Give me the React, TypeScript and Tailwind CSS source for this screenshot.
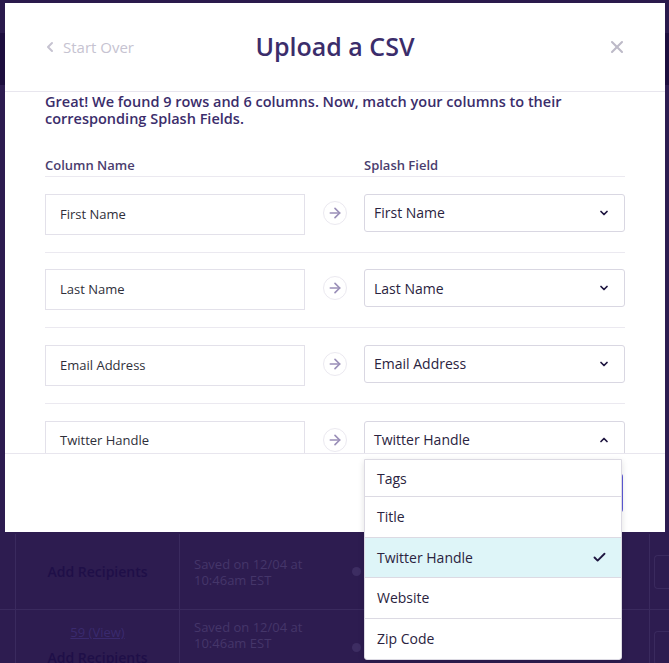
import { ChevronLeft, X, ArrowRight, ChevronDown, ChevronUp, Check } from 'lucide-react';

const rows = [
  { column: 'First Name', field: 'First Name', open: false },
  { column: 'Last Name', field: 'Last Name', open: false },
  { column: 'Email Address', field: 'Email Address', open: false },
  { column: 'Twitter Handle', field: 'Twitter Handle', open: true },
];

const options = ['Tags', 'Title', 'Twitter Handle', 'Website', 'Zip Code'];

function SavedOn() {
  return (
    <div className="flex flex-col text-[13px] leading-[16px] text-[#45366a]">
      <span>Saved on 12/04 at</span>
      <span>10:46am EST</span>
    </div>
  );
}

function BackgroundPage() {
  return (
    <div className="flex h-full w-full flex-col bg-[#2d1c50]">
      <div className="h-[33px] shrink-0 bg-[#2a1a4c]" />
      <div className="h-[52px] shrink-0 bg-[#1d0e3e]" />
      <div className="h-[449px] shrink-0" />
      <div className="flex h-[76px] shrink-0 border-b border-[#3a2a5e]">
        <div className="w-[16px] border-r border-[#3a2a5e]" />
        <div className="flex w-[164px] items-center justify-center border-r border-[#3a2a5e] text-[14px] font-semibold text-[#1f0f48]">
          Add Recipients
        </div>
        <div className="flex w-[160px] items-center pl-[14px]">
          <SavedOn />
        </div>
        <div className="flex flex-1 items-center pl-[12px]">
          <span className="size-[9px] rounded-full bg-[#3d2d62]" />
        </div>
        <div className="flex w-[20px] items-center border-l border-[#3a2a5e] pl-[4px]">
          <span className="h-[34px] w-[16px] rounded-l border border-r-0 border-[#3a2a5e]" />
        </div>
      </div>
      <div className="flex h-[76px] shrink-0">
        <div className="w-[16px] border-r border-[#3a2a5e]" />
        <div className="flex w-[164px] flex-col items-center gap-[10px] border-r border-[#3a2a5e] pt-[14px] leading-[16px]">
          <span className="text-[13px] text-[#3a2a6e] underline">59 (View)</span>
          <span className="text-[14px] font-semibold text-[#1f0f48]">Add Recipients</span>
        </div>
        <div className="w-[160px] pl-[14px] pt-[9px]">
          <SavedOn />
        </div>
        <div className="flex flex-1 items-start pl-[12px] pt-[33px]">
          <span className="size-[9px] rounded-full bg-[#3d2d62]" />
        </div>
        <div className="flex w-[20px] items-start border-l border-[#3a2a5e] pl-[4px] pt-[21px]">
          <span className="h-[34px] w-[16px] rounded-l border border-r-0 border-[#3a2a5e]" />
        </div>
      </div>
    </div>
  );
}

function MappingRow({ column, field, open }: { column: string; field: string; open: boolean }) {
  return (
    <div className="flex items-start border-b border-[#ebe9f0] py-[16.8px]">
      <div className="flex h-[41px] w-[260px] items-center border border-[#e3e1ea] pl-[14px] text-[13px] text-[#2f2f3a]">
        {column}
      </div>
      <div className="flex w-[59px] justify-center pt-[7px]">
        <div className="flex size-[24px] items-center justify-center rounded-full border border-[#ebe9f0]">
          <ArrowRight size={16} strokeWidth={2.5} className="text-[#9a8fb8]" />
        </div>
      </div>
      <div className="flex h-[38px] flex-1 items-center justify-between rounded-[3px] border border-[#d9d7e2] pl-[9px] pr-[14px] text-[14px] text-[#2a2340]">
        <span>{field}</span>
        {open ? (
          <ChevronUp size={12} strokeWidth={3.5} className="text-[#1f1640]" />
        ) : (
          <ChevronDown size={12} strokeWidth={3.5} className="text-[#1f1640]" />
        )}
      </div>
    </div>
  );
}

export default function App() {
  return (
    <div className="relative h-[663px] w-full overflow-hidden font-['Open_Sans',sans-serif]">
      <BackgroundPage />

      {/* modal */}
      <div className="absolute left-[5px] top-[3px] flex h-[529px] w-[660px] flex-col bg-white">
        <div className="relative flex h-[89px] shrink-0 items-center justify-center border-b border-[#e8e6ee]">
          <div className="absolute left-[37px] flex items-center gap-[5px] text-[15px] text-[#c6c3d1]">
            <ChevronLeft size={16} strokeWidth={3} />
            <span>Start Over</span>
          </div>
          <h1 className="text-[25px] font-semibold text-[#3b2d6b]">Upload a CSV</h1>
          <X size={20} strokeWidth={2.5} className="absolute right-[38px] text-[#bdbac8]" />
        </div>

        <div className="flex-1 overflow-hidden px-[40px] pt-[1px]">
          <p className="text-[14.5px] font-semibold leading-[17px] text-[#3b2d6b]">
            Great! We found 9 rows and 6 columns. Now, match your columns to their corresponding Splash Fields.
          </p>
          <div className="mt-[30px] flex border-b border-[#ebe9f0] pb-[3px] text-[13px] font-semibold leading-[16px] text-[#4a3d6e]">
            <span className="w-[319px]">Column Name</span>
            <span>Splash Field</span>
          </div>
          {rows.map((r) => (
            <MappingRow key={r.column} {...r} />
          ))}
        </div>

        <div className="flex h-[79px] shrink-0 items-center justify-end border-t border-[#e8e6ee] pr-[42px]">
          <button className="h-[40px] w-[110px] rounded-[4px] border-2 border-[#5d5ad8] text-[14px] font-semibold text-[#5d5ad8]">
            Next
          </button>
        </div>
      </div>

      {/* open select menu */}
      <ul className="absolute left-[364px] top-[459px] w-[258px] overflow-hidden rounded-b-[3px] border border-[#dcdae3] bg-white shadow-[0_2px_6px_rgba(0,0,0,0.12)]">
        {options.map((o, i) => (
          <li
            key={o}
            className={
              'flex items-center justify-between border-b border-[#dcdae3] pl-[12px] pr-[14px] text-[14px] text-[#2a2340] last:border-b-0 ' +
              (i === 0 ? 'h-[37px] ' : 'h-[40.5px] ') +
              (o === 'Twitter Handle' ? 'bg-[#def5f8]' : '')
            }
          >
            <span>{o}</span>
            {o === 'Twitter Handle' && <Check size={15} strokeWidth={3} className="text-[#1f1640]" />}
          </li>
        ))}
      </ul>
    </div>
  );
}
